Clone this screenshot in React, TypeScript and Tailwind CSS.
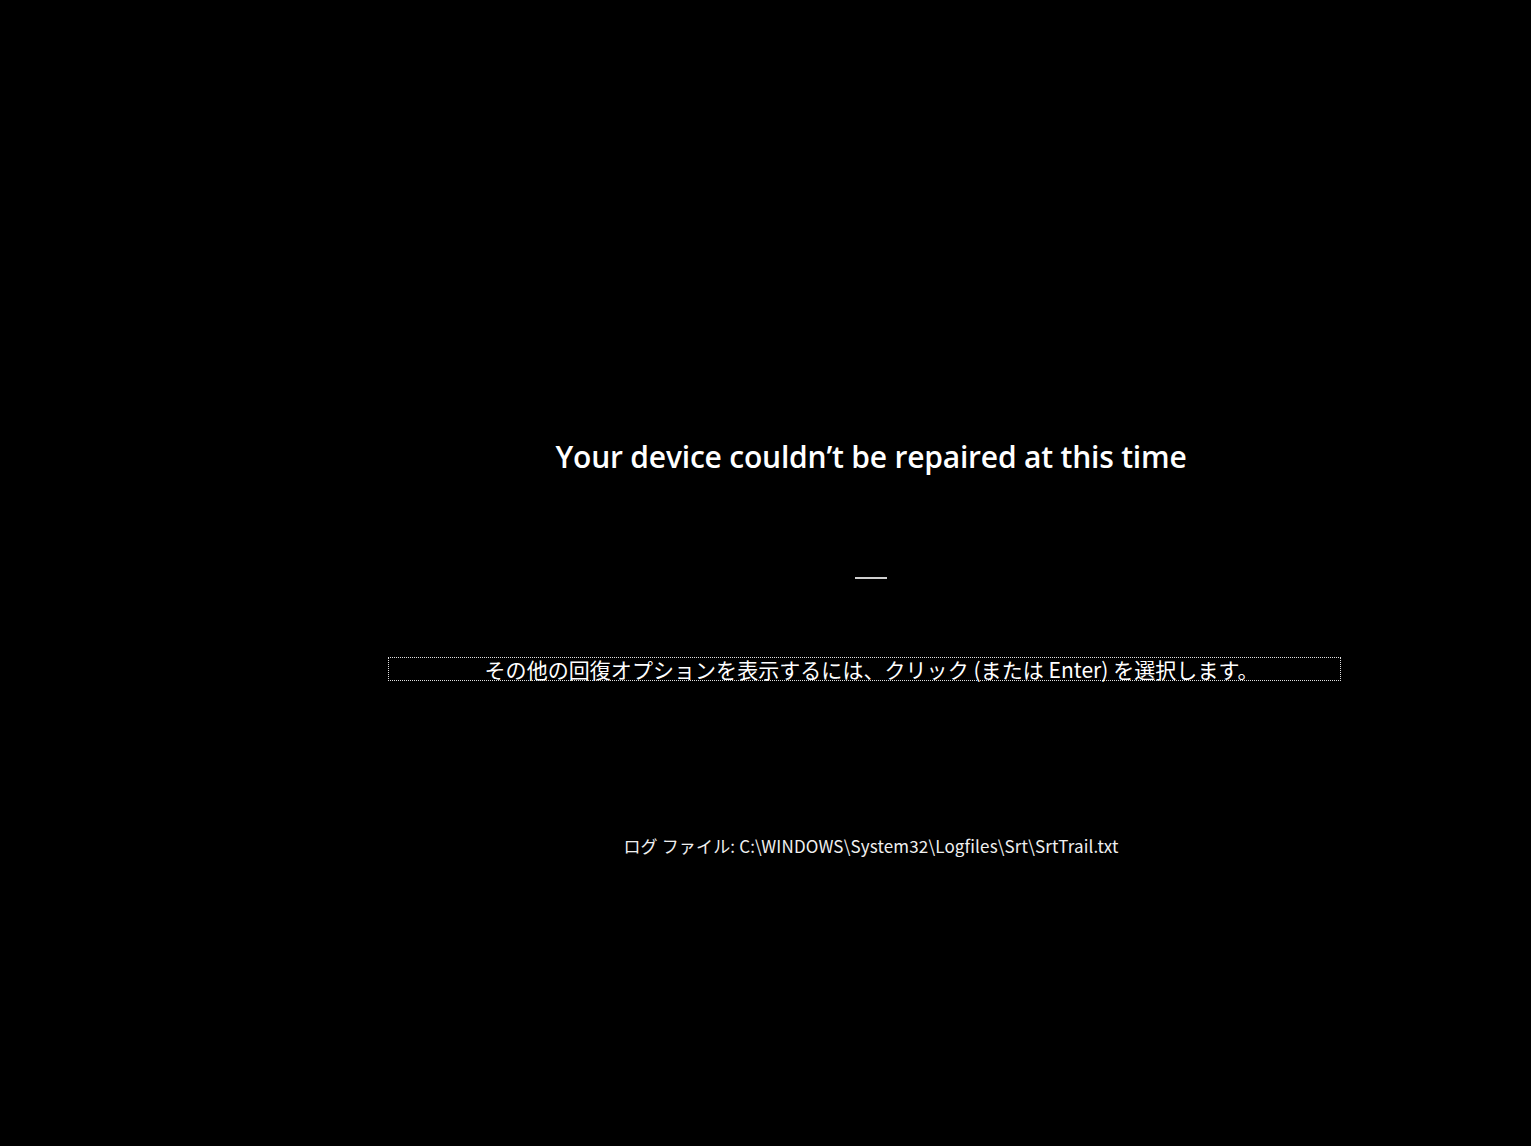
import React from "react";

export default function App() {
    return (
        <div
            className="w-[1531px] h-[1146px] bg-black text-white overflow-hidden"
            style={{ fontFamily: '"Open Sans", "Noto Sans CJK JP", sans-serif' }}
        >
            <div className="ml-[211px] w-[1320px] flex flex-col items-center pt-[435px]">
                {/* Title */}
                <h1 className="text-[30px] leading-[44px] font-semibold tracking-[-0.2px]">
                    Your device couldn’t be repaired at this time
                </h1>

                {/* Separator */}
                <div className="mt-[98px] w-[32px] h-[2px] bg-[#cfcfcf]"></div>

                {/* Advanced options */}
                <button
                    className="mt-[78px] ml-[-13px] w-[953px] h-[24px] border border-dotted border-[#e0e0e0] flex items-center justify-center text-[21px] leading-none tracking-[0.05px] text-white"
                    style={{ fontFamily: '"Noto Sans CJK JP", sans-serif' }}
                >
                    <span className="ml-[14px]">その他の回復オプションを表示するには、クリック (または Enter) を選択します。</span>
                </button>

                {/* Log file */}
                <p
                    className="mt-[153px] text-[17px] leading-[24px] tracking-[0.15px] text-[#f0f0f0]"
                    style={{ fontFamily: '"Noto Sans CJK JP", sans-serif' }}
                >
                    ログ ファイル: C:\WINDOWS\System32\Logfiles\Srt\SrtTrail.txt
                </p>
            </div>
        </div>
    );
}
